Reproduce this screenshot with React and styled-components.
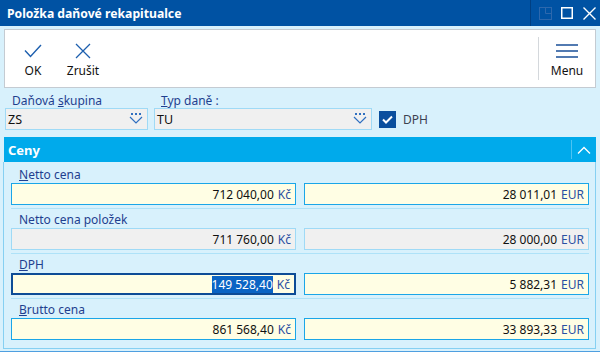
import React from 'react';
import styled, { createGlobalStyle } from 'styled-components';

const GlobalStyle = createGlobalStyle`
  html, body {
    margin: 0;
    padding: 0;
  }
  body {
    font-family: 'Noto Sans', 'Open Sans', sans-serif;
    font-size: 12px;
    color: #111;
  }
`;

const Window = styled.div`
  width: 600px;
  height: 352px;
  box-sizing: border-box;
  display: flex;
  flex-direction: column;
  background: #d8f1fc;
  border-bottom: 1px solid #4f9fe0;
  overflow: hidden;
`;

const TitleBar = styled.div`
  height: 26px;
  flex: none;
  display: flex;
  align-items: center;
  background: #0052a3;
  padding-left: 7px;
  color: #fff;
  font-weight: 700;
  font-size: 12.2px;
`;

const Title = styled.div`
  flex: 1;
`;

const WinButtons = styled.div`
  display: flex;
  align-items: center;
  height: 100%;
  border-left: 1px solid #003f82;
`;

const WinButton = styled.div`
  width: 22px;
  height: 26px;
  display: flex;
  align-items: center;
  justify-content: center;
  margin-left: ${p => (p.$first ? '3px' : '0')};
`;

const Body = styled.div`
  flex: 1;
  display: flex;
  flex-direction: column;
  padding: 3px 4px 0 3px;
`;

const Toolbar = styled.div`
  height: 59px;
  flex: none;
  margin-left: 1px;
  box-sizing: border-box;
  background: #fff;
  border: 1px solid #c4cbd2;
  display: flex;
  padding-left: 3px;
`;

const ToolButton = styled.div`
  width: ${p => p.$w || 50}px;
  display: flex;
  flex-direction: column;
  align-items: center;
  padding-top: 12px;
  color: #111;
`;

const ToolIcon = styled.div`
  height: 18px;
  display: flex;
  align-items: center;
  justify-content: center;
  margin-bottom: 2px;
`;

const Spacer = styled.div`
  flex: 1;
`;

const ToolDivider = styled.div`
  width: 1px;
  background: #d4d8dc;
  margin: 7px 0 7px 0;
`;

const TopFields = styled.div`
  display: flex;
  align-items: flex-end;
  padding: 5px 0 0 2px;
`;

const Field = styled.div`
  display: flex;
  flex-direction: column;
  width: ${p => p.$w}px;
  margin-right: ${p => p.$mr || 0}px;
`;

const Label = styled.div`
  height: 15px;
  line-height: 15px;
  padding-left: 7px;
  color: #1f3f8f;
  white-space: nowrap;
`;

const U = styled.span`
  text-decoration: underline;
`;

const Input = styled.div`
  box-sizing: border-box;
  height: 22px;
  display: flex;
  align-items: center;
  justify-content: ${p => (p.$right ? 'flex-end' : 'space-between')};
  padding: ${p => (p.$right ? '0 4px 0 4px' : '0 0 0 2px')};
  background: ${p => (p.$yellow ? '#fffee4' : '#f0f0f0')};
  border: ${p =>
    p.$focus
      ? '2px solid #0d4c96'
      : p.$yellow
      ? '1px solid #1aa6e8'
      : '1px solid #9fdaf6'};
  color: #111;
  white-space: nowrap;
`;

const Combo = styled(Input)`
  padding-right: 4px;
  font-size: 12.5px;
`;

const CheckWrap = styled.div`
  display: flex;
  align-items: center;
  height: 22px;
  margin-left: 7px;
  color: #3c4250;
`;

const CheckBox = styled.div`
  width: 17px;
  height: 17px;
  background: #0a4f9e;
  display: flex;
  align-items: center;
  justify-content: center;
  margin-right: 7px;
`;

const SectionHeader = styled.div`
  margin-top: 7px;
  margin-left: 1px;
  height: 25px;
  flex: none;
  background: #00aaeb;
  display: flex;
  align-items: stretch;
  color: #fff;
  font-weight: 700;
  font-size: 13px;
`;

const SectionTitle = styled.div`
  flex: 1;
  display: flex;
  align-items: center;
  padding-left: 4px;
`;

const Collapse = styled.div`
  width: 24px;
  display: flex;
  align-items: center;
  justify-content: center;
  border-left: 1px solid #4cc3f2;
  margin: 3px 0;
`;

const Panel = styled.div`
  border: 1px solid #86d0f2;
  border-top: none;
  padding: 2px 6px 0 7px;
  height: 187px;
  box-sizing: border-box;
`;

const Row = styled.div`
  padding: 3px 0 3px;
  border-bottom: ${p => (p.$last ? 'none' : '1px solid #aee2f8')};
  height: 45px;
  box-sizing: border-box;
`;

const RowLabel = styled(Label)`
  padding-left: 8px;
`;

const Pair = styled.div`
  display: grid;
  grid-template-columns: 285px 285px;
  column-gap: 8px;
  margin-top: 1px;
`;

const Unit = styled.span`
  color: #2a4fa2;
  margin-left: 4px;
`;

const Selected = styled.span`
  background: #0a64c4;
  color: #fff;
`;

const Check = () => (
  <svg width="18" height="14" viewBox="0 0 18 14">
    <path d="M1 6.5 L6.5 12.5 L17 1" fill="none" stroke="#1d5fae" strokeWidth="1.4" />
  </svg>
);

const Cross = () => (
  <svg width="16" height="16" viewBox="0 0 16 16">
    <path d="M1 1 L15 15 M15 1 L1 15" fill="none" stroke="#1d5fae" strokeWidth="1.3" />
  </svg>
);

const Hamburger = () => (
  <svg width="22" height="16" viewBox="0 0 22 16">
    <path d="M0 2 H22 M0 8 H22 M0 14 H22" fill="none" stroke="#1a4f98" strokeWidth="1.6" />
  </svg>
);

const DropIcon = () => (
  <svg width="14" height="12" viewBox="0 0 14 12">
    <rect x="2" y="0" width="2" height="2" fill="#2f6fc0" />
    <rect x="6" y="0" width="2" height="2" fill="#2f6fc0" />
    <rect x="10" y="0" width="2" height="2" fill="#2f6fc0" />
    <path d="M1 4 L7 10 L13 4" fill="none" stroke="#2f6fc0" strokeWidth="1.2" />
  </svg>
);

const rows = [
  { label: <><U>N</U>etto cena</>, czk: '712 040,00', eur: '28 011,01', yellow: true },
  { label: 'Netto cena položek', czk: '711 760,00', eur: '28 000,00', yellow: false },
  { label: <><U>D</U>PH</>, czk: '149 528,40', eur: '5 882,31', yellow: true, focus: true },
  { label: <><U>B</U>rutto cena</>, czk: '861 568,40', eur: '33 893,33', yellow: true },
];

export default function App() {
  return (
    <Window>
      <GlobalStyle />
      <TitleBar>
        <Title>Položka daňové rekapitualce</Title>
        <WinButtons>
          <WinButton $first>
            <svg width="13" height="13" viewBox="0 0 13 13">
              <rect x="0.5" y="0.5" width="12" height="12" fill="none" stroke="#2d68ad" />
              <path d="M6.5 0.5 V6.5 H12.5" fill="none" stroke="#2d68ad" />
            </svg>
          </WinButton>
          <WinButton>
            <svg width="12" height="12" viewBox="0 0 12 12">
              <rect x="0.75" y="0.75" width="10.5" height="10.5" fill="none" stroke="#fff" strokeWidth="1.5" />
            </svg>
          </WinButton>
          <WinButton>
            <svg width="13" height="13" viewBox="0 0 13 13">
              <path d="M0.5 0.5 L12.5 12.5 M12.5 0.5 L0.5 12.5" fill="none" stroke="#fff" strokeWidth="1.4" />
            </svg>
          </WinButton>
        </WinButtons>
      </TitleBar>
      <Body>
        <Toolbar>
          <ToolButton>
            <ToolIcon><Check /></ToolIcon>
            OK
          </ToolButton>
          <ToolButton>
            <ToolIcon><Cross /></ToolIcon>
            Zrušit
          </ToolButton>
          <Spacer />
          <ToolDivider />
          <ToolButton $w={56}>
            <ToolIcon><Hamburger /></ToolIcon>
            Menu
          </ToolButton>
        </Toolbar>
        <TopFields>
          <Field $w={143} $mr={6}>
            <Label>Daňová <U>s</U>kupina</Label>
            <Combo>
              ZS
              <DropIcon />
            </Combo>
          </Field>
          <Field $w={218}>
            <Label><U>T</U>yp daně :</Label>
            <Combo>
              TU
              <DropIcon />
            </Combo>
          </Field>
          <CheckWrap>
            <CheckBox>
              <svg width="11" height="9" viewBox="0 0 11 9">
                <path d="M1 4.5 L4 7.5 L10 1.5" fill="none" stroke="#fff" strokeWidth="2" />
              </svg>
            </CheckBox>
            DPH
          </CheckWrap>
        </TopFields>
        <SectionHeader>
          <SectionTitle>Ceny</SectionTitle>
          <Collapse>
            <svg width="14" height="8" viewBox="0 0 14 8">
              <path d="M1 7.5 L7 1.5 L13 7.5" fill="none" stroke="#fff" strokeWidth="1.3" />
            </svg>
          </Collapse>
        </SectionHeader>
        <Panel>
          {rows.map((r, i) => (
            <Row key={i} $last={i === rows.length - 1}>
              <RowLabel>{r.label}</RowLabel>
              <Pair>
                <Input $right $yellow={r.yellow} $focus={r.focus}>
                  {r.focus ? <Selected>{r.czk}</Selected> : r.czk}
                  <Unit>Kč</Unit>
                </Input>
                <Input $right $yellow={r.yellow}>
                  {r.eur}
                  <Unit>EUR</Unit>
                </Input>
              </Pair>
            </Row>
          ))}
        </Panel>
      </Body>
    </Window>
  );
}
